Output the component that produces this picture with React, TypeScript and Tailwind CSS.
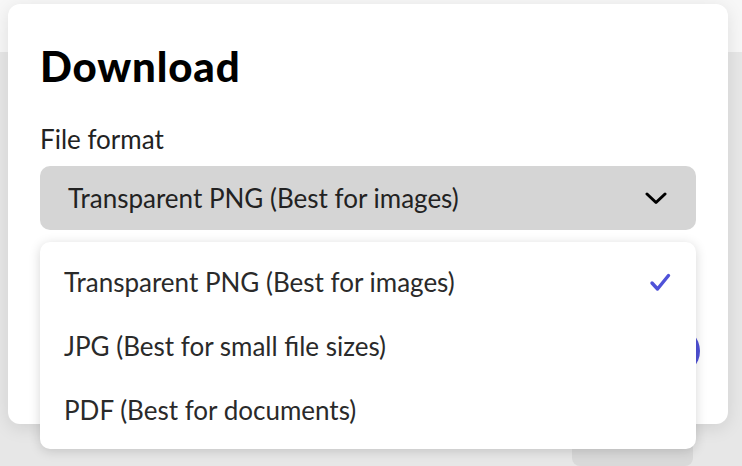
import { useState } from 'react';

const FORMATS = [
  'Transparent PNG (Best for images)',
  'JPG (Best for small file sizes)',
  'PDF (Best for documents)',
] as const;

function ChevronIcon() {
  return (
    <svg width="22" height="13" viewBox="0 0 22 13" fill="none" aria-hidden="true">
      <polyline points="2,2 11,10.5 20,2" stroke="#000" strokeWidth="3" strokeLinecap="round" strokeLinejoin="round" />
    </svg>
  );
}

function CheckIcon() {
  return (
    <svg width="22" height="20" viewBox="0 0 22 20" fill="none" aria-hidden="true">
      <polyline points="3,11 8.5,17 19.5,3.5" stroke="#4f52d8" strokeWidth="3.4" strokeLinecap="round" strokeLinejoin="round" />
    </svg>
  );
}

export default function App() {
  const [selected, setSelected] = useState<string>(FORMATS[0]);

  return (
    <div className="relative h-[466px] w-[742px] overflow-hidden bg-[#e7e7e7] font-['Lato',sans-serif]">
      {/* page behind the dialog */}
      <div className="flex h-full flex-col">
        <div className="h-[88px] bg-[#f7f7f7]" />
        <div className="flex-1 pl-[572px] pt-[374px]">
          <div className="h-10 w-[121px] rounded-lg bg-[#d9d9d9]" />
        </div>
      </div>

      {/* dialog */}
      <div className="absolute left-2 top-1 h-[420px] w-[720px] rounded-xl bg-white px-8 pt-[38px] shadow-[0_4px_18px_rgba(0,0,0,0.10)]">
        <h1 className="text-[42px] font-black leading-[48px] tracking-[0.02em] text-black">Download</h1>

        <p className="mt-[33px] text-[26px] leading-8 text-[#222]">File format</p>

        <button
          type="button"
          className="mt-[11px] flex h-16 w-full items-center justify-between rounded-[10px] bg-[#d5d5d5] pl-7 pr-[29px] text-left text-[26px] leading-8 text-[#222]"
        >
          <span>{selected}</span>
          <ChevronIcon />
        </button>

        <div className="mr-[-4px] mt-[97px] flex justify-end">
          <button type="button" className="h-12 w-[150px] rounded-full bg-[#4f52d8] text-[20px] font-bold text-white">
            Download
          </button>
        </div>

        {/* open select menu */}
        <div className="absolute left-8 right-8 top-[238px] rounded-[10px] bg-white pb-[7px] pt-2 shadow-[0_2px_12px_rgba(0,0,0,0.16)]">
          {FORMATS.map((format) => (
            <div
              key={format}
              onClick={() => setSelected(format)}
              className="flex h-16 items-center justify-between pl-6 pr-[25px] text-[26px] leading-8 text-[#2a2a2a]"
            >
              <span>{format}</span>
              {format === selected ? <CheckIcon /> : null}
            </div>
          ))}
        </div>
      </div>
    </div>
  );
}
